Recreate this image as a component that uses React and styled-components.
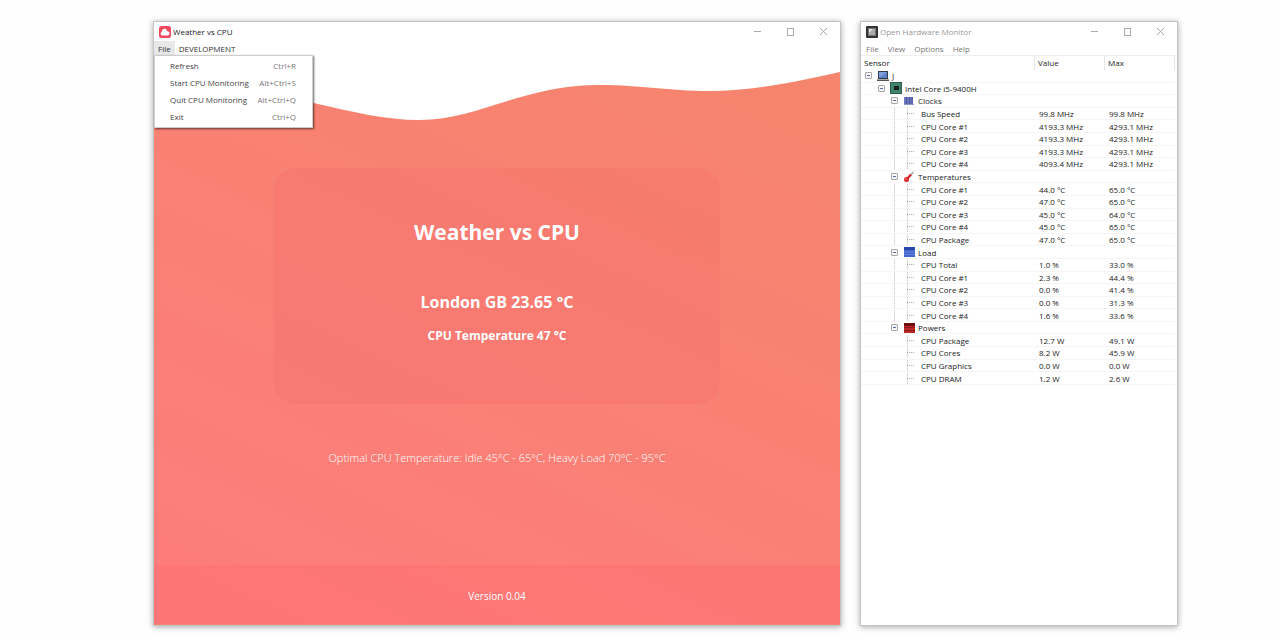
import React from "react";
import styled, { createGlobalStyle } from "styled-components";

const GlobalStyle = createGlobalStyle`
  * {
    box-sizing: border-box;
  }

  body {
    margin: 0;
    background: #fefefe;
    color: #222;
    font-family: "Open Sans", "Noto Sans", sans-serif;
    font-size: 8px;
  }

  button {
    margin: 0;
    padding: 0;
    border: none;
    background: none;
    color: inherit;
    font: inherit;
    cursor: pointer;
  }
`;

const Desktop = styled.main`
  display: flex;
  gap: 19px;
  min-height: 100vh;
  padding: 21px 102px 14px 153px;
`;

const Window = styled.section`
  display: flex;
  flex: ${({ $grow }) => $grow} 1 0;
  flex-direction: column;
  min-width: 0;
  border: 1px solid #c4c4c4;
  background: #fff;
  box-shadow: 0 1px 6px rgba(0, 0, 0, 0.35);
`;

const TitleBar = styled.header`
  display: flex;
  align-items: center;
  height: 19px;
  padding-left: 5px;
  color: ${({ $inactive }) => ($inactive ? "#999" : "#222")};
`;

const WindowTitle = styled.h2`
  flex: 1;
  margin: 0 0 0 2px;
  font-size: 8px;
  font-weight: 400;
`;

const WindowButton = styled.button`
  display: flex;
  align-items: center;
  justify-content: center;
  width: 33px;
  height: 19px;
  color: #aaa;
`;

const MenuBar = styled.nav`
  position: relative;
  display: flex;
  gap: ${({ $muted }) => ($muted ? 1 : 0)}px;
  height: 14px;
  padding-left: ${({ $muted }) => ($muted ? 1 : 0)}px;
  color: ${({ $muted }) => ($muted ? "#777" : "#333")};
`;

const MenuButton = styled.button`
  padding: 0 4px;
  background: ${({ $open }) => ($open ? "#e8e8e8" : "transparent")};
`;

const Dropdown = styled.div`
  position: absolute;
  top: 14px;
  left: 0;
  z-index: 2;
  display: flex;
  flex-direction: column;
  width: 159px;
  padding: 1px 0 2px;
  border: 1px solid #ccc;
  background: #fff;
  box-shadow: 1px 1px 2px rgba(0, 0, 0, 0.6);
`;

const MenuItem = styled.button`
  display: flex;
  align-items: center;
  justify-content: space-between;
  height: 17px;
  padding: 0 16px 0 15px;
  color: #444;
`;

const Shortcut = styled.span`
  color: #777;
`;

const Weather = styled.div`
  position: relative;
  display: flex;
  flex: 1;
  flex-direction: column;
  align-items: center;
  padding-top: 113px;
  background: linear-gradient(25deg, #fe7c7d, #f5856c);
  color: #fff;
  text-align: center;
`;

const Wave = styled.svg`
  position: absolute;
  top: 0;
  left: 0;
  width: 100%;
  height: 71px;
`;

const Card = styled.div`
  display: flex;
  flex-direction: column;
  align-items: center;
  width: 65%;
  height: 236px;
  padding-top: 48px;
  border-radius: 22px;
  background: rgba(246, 110, 110, 0.32);
`;

const Heading = styled.h1`
  margin: 0;
  font-size: 21px;
  font-weight: 700;
  line-height: 32px;
`;

const Place = styled.h2`
  margin: 42px 0 0;
  font-size: 16px;
  font-weight: 700;
  line-height: 24px;
`;

const CpuTemperature = styled.h3`
  margin: 13px 0 0;
  font-size: 12px;
  font-weight: 700;
  line-height: 18px;
`;

const Hint = styled.p`
  flex: 1;
  margin: 46px 0 0;
  font-size: 11px;
  font-weight: 300;
  line-height: 16px;
`;

const Footer = styled.footer`
  width: 100%;
  height: 60px;
  border-bottom: 1px solid #f6856f;
  background: rgba(255, 106, 112, 0.35);
  font-size: 10px;
  line-height: 62px;
`;

const SensorTable = styled.table`
  width: calc(100% - 2px);
  height: 330px;
  border-top: 1px solid #eee;
  border-spacing: 0;
  table-layout: fixed;
`;

const HeaderCell = styled.th`
  width: ${({ $width }) => $width || "auto"};
  height: 14px;
  padding: 0 3px;
  border-right: 1px solid #e5e5e5;
  font-weight: 400;
  line-height: 12px;
  text-align: left;
`;

const Cell = styled.td`
  padding: 0 4px;
  border-bottom: 1px solid #f5f5f5;
  line-height: 11px;
`;

const TreeCell = styled(Cell)`
  padding: 0 0 0 1px;
`;

const Branch = styled.div`
  display: flex;
  align-items: center;
  height: 11px;
`;

const Guide = styled.span`
  display: flex;
  justify-content: flex-end;
  align-items: center;
  align-self: stretch;
  width: 13px;
  background: ${({ $line }) =>
    $line
      ? "repeating-linear-gradient(#ccc 0 1px, #eee 1px 2px) 6px 0 / 1px 100% no-repeat"
      : "none"};
`;

const Twig = styled.span`
  width: 7px;
  border-top: 1px dotted #aaa;
`;

const Toggle = styled.button`
  width: 7px;
  height: 7px;
  margin: 0 3px;
  border: 1px solid #aaa;
  border-radius: 1px;
  background: linear-gradient(#5a6fa8, #5a6fa8) center / 3px 1px no-repeat #f6f6f6;
`;

const NodeIcon = styled.svg`
  width: 12px;
  height: 12px;
  margin: 0 3px 0 2px;
`;

const LeafName = styled.span`
  margin-left: 7px;
`;

const AppLogo = () => (
  <svg width="12" height="12" viewBox="0 0 24 24">
    <rect width="24" height="24" rx="5" fill="#ee4a5e" />
    <path
      d="M6.500 19a4 4 0 0 1-.9-7.600C6 7 9 4.800 12 5.500c2.500.5 3.500 2.500 3.800 4.500 3.200.5 5.200 2.500 5.200 5 0 2.600-1.800 4-4 4z"
      fill="#fff"
    />
  </svg>
);

const MonitorLogo = () => (
  <svg width="12" height="12" viewBox="0 0 12 12">
    <rect width="12" height="12" rx="1" fill="#333" />
    <rect x="2.500" y="2.500" width="7" height="7" fill="#aaa" stroke="#777" />
    <path d="M3 3h4L3 7z" fill="#ddd" />
  </svg>
);

const WindowControls = () => (
  <>
    <WindowButton aria-label="Minimize">
      <svg width="7" height="7" viewBox="0 0 7 7">
        <path d="M0 3.500h7" stroke="currentColor" />
      </svg>
    </WindowButton>
    <WindowButton aria-label="Maximize">
      <svg width="8" height="8" viewBox="0 0 8 8">
        <rect x=".5" y=".5" width="6" height="7" fill="none" stroke="currentColor" />
      </svg>
    </WindowButton>
    <WindowButton aria-label="Close">
      <svg width="7" height="7" viewBox="0 0 7 7">
        <path d="M0 0l7 7M7 0L0 7" stroke="currentColor" />
      </svg>
    </WindowButton>
  </>
);

const ICONS = {
  computer: (
    <>
      <rect x="1" y="1" width="10" height="8" fill="#333a4c" />
      <rect x="2" y="2" width="8" height="6" fill="#7f9fdc" />
      <path d="M2 8l8-6v6z" fill="#5c7fc8" />
      <rect x="0" y="9.500" width="12" height="1.500" fill="#555" />
    </>
  ),
  cpu: (
    <>
      <rect width="12" height="12" fill="#2f5f50" />
      <rect x="1" y="1" width="10" height="10" fill="#41826c" />
      <rect x="4" y="4" width="5" height="4" fill="#16221e" />
    </>
  ),
  clocks: (
    <>
      <rect x="1" y="2" width="9" height="8" fill="#6f78bd" />
      <path d="M3.500 2v7M6.500 2v7M9 2v7" stroke="#4a53a0" />
      <path d="M1 9.500h10" stroke="#8f96cc" />
    </>
  ),
  temperatures: (
    <>
      <path d="M4 8l6.500-7" stroke="#bbb" strokeWidth="2" />
      <path d="M3.500 8.500L8 3.500" stroke="#d42020" strokeWidth="2" />
      <circle cx="3.500" cy="8.500" r="2.500" fill="#d92626" />
      <circle cx="3" cy="8" r=".8" fill="#f79090" />
    </>
  ),
  load: (
    <>
      <rect x="1" y="1" width="11" height="10" fill="#4568cf" />
      <rect x="1" y="1" width="11" height="3" fill="#2a46a8" />
      <path d="M1 6h11M1 8.500h11" stroke="#7590e2" strokeWidth=".6" />
    </>
  ),
  powers: (
    <>
      <rect x="1" y="1" width="11" height="10" fill="#bb2727" />
      <rect x="1" y="1" width="11" height="3" fill="#6d0d0d" />
      <path d="M1 5.500h11M1 8.500h11" stroke="#7d1616" strokeWidth=".7" />
    </>
  ),
};

const MENU_ITEMS = [
  ["Refresh", "Ctrl+R"],
  ["Start CPU Monitoring", "Alt+Ctrl+S"],
  ["Quit CPU Monitoring", "Alt+Ctrl+Q"],
  ["Exit", "Ctrl+Q"],
];

const GROUPS = [
  {
    name: "Clocks",
    icon: "clocks",
    sensors: [
      ["Bus Speed", "99.8 MHz", "99.8 MHz"],
      ["CPU Core #1", "4193.3 MHz", "4293.1 MHz"],
      ["CPU Core #2", "4193.3 MHz", "4293.1 MHz"],
      ["CPU Core #3", "4193.3 MHz", "4293.1 MHz"],
      ["CPU Core #4", "4093.4 MHz", "4293.1 MHz"],
    ],
  },
  {
    name: "Temperatures",
    icon: "temperatures",
    sensors: [
      ["CPU Core #1", "44.0 °C", "65.0 °C"],
      ["CPU Core #2", "47.0 °C", "65.0 °C"],
      ["CPU Core #3", "45.0 °C", "64.0 °C"],
      ["CPU Core #4", "45.0 °C", "65.0 °C"],
      ["CPU Package", "47.0 °C", "65.0 °C"],
    ],
  },
  {
    name: "Load",
    icon: "load",
    sensors: [
      ["CPU Total", "1.0 %", "33.0 %"],
      ["CPU Core #1", "2.3 %", "44.4 %"],
      ["CPU Core #2", "0.0 %", "41.4 %"],
      ["CPU Core #3", "0.0 %", "31.3 %"],
      ["CPU Core #4", "1.6 %", "33.6 %"],
    ],
  },
  {
    name: "Powers",
    icon: "powers",
    sensors: [
      ["CPU Package", "12.7 W", "49.1 W"],
      ["CPU Cores", "8.2 W", "45.9 W"],
      ["CPU Graphics", "0.0 W", "0.0 W"],
      ["CPU DRAM", "1.2 W", "2.6 W"],
    ],
  },
];

const NodeRow = ({ depth, icon, name }) => (
  <tr>
    <TreeCell>
      <Branch>
        {Array.from({ length: depth }, (_, i) => (
          <Guide key={i} />
        ))}
        <Toggle aria-label={`Collapse ${name}`} />
        <NodeIcon viewBox="0 0 12 12">{ICONS[icon]}</NodeIcon>
        {name}
      </Branch>
    </TreeCell>
    <Cell />
    <Cell />
  </tr>
);

const SensorRow = ({ name, value, max, lastGroup }) => (
  <tr>
    <TreeCell>
      <Branch>
        <Guide />
        <Guide />
        <Guide $line={!lastGroup} />
        <Guide $line>
          <Twig />
        </Guide>
        <LeafName>{name}</LeafName>
      </Branch>
    </TreeCell>
    <Cell>{value}</Cell>
    <Cell>{max}</Cell>
  </tr>
);

const WeatherWindow = () => (
  <Window $grow={686}>
    <TitleBar>
      <AppLogo />
      <WindowTitle>Weather vs CPU</WindowTitle>
      <WindowControls />
    </TitleBar>
    <MenuBar>
      <MenuButton $open>File</MenuButton>
      <MenuButton>DEVELOPMENT</MenuButton>
      <Dropdown>
        {MENU_ITEMS.map(([label, keys]) => (
          <MenuItem key={label}>
            {label}
            <Shortcut>{keys}</Shortcut>
          </MenuItem>
        ))}
      </Dropdown>
    </MenuBar>
    <Weather>
      <Wave viewBox="0 -1 688 71" preserveAspectRatio="none">
        <path
          d="M0 -1V44C50 30 100 36 160 47C200 56 232 64 266 64C325 64 370 29 447 29C490 29 515 35 557 35C605 35 650 24 688 16V-1z"
          fill="#fff"
        />
      </Wave>
      <Card>
        <Heading>Weather vs CPU</Heading>
        <Place>London GB 23.65 °C</Place>
        <CpuTemperature>CPU Temperature 47 °C</CpuTemperature>
      </Card>
      <Hint>Optimal CPU Temperature: Idle 45°C - 65°C, Heavy Load 70°C - 95°C</Hint>
      <Footer>Version 0.04</Footer>
    </Weather>
  </Window>
);

const MonitorWindow = () => (
  <Window $grow={316}>
    <TitleBar $inactive>
      <MonitorLogo />
      <WindowTitle>Open Hardware Monitor</WindowTitle>
      <WindowControls />
    </TitleBar>
    <MenuBar $muted>
      <MenuButton>File</MenuButton>
      <MenuButton>View</MenuButton>
      <MenuButton>Options</MenuButton>
      <MenuButton>Help</MenuButton>
    </MenuBar>
    <SensorTable>
      <thead>
        <tr>
          <HeaderCell>Sensor</HeaderCell>
          <HeaderCell $width="70px">Value</HeaderCell>
          <HeaderCell $width="70px">Max</HeaderCell>
        </tr>
      </thead>
      <tbody>
        <NodeRow depth={0} icon="computer" name="J" />
        <NodeRow depth={1} icon="cpu" name="Intel Core i5-9400H" />
        {GROUPS.map((group, index) => (
          <React.Fragment key={group.name}>
            <NodeRow depth={2} icon={group.icon} name={group.name} />
            {group.sensors.map(([name, value, max]) => (
              <SensorRow
                key={name}
                name={name}
                value={value}
                max={max}
                lastGroup={index === GROUPS.length - 1}
              />
            ))}
          </React.Fragment>
        ))}
      </tbody>
    </SensorTable>
  </Window>
);

const App = () => (
  <>
    <GlobalStyle />
    <Desktop>
      <WeatherWindow />
      <MonitorWindow />
    </Desktop>
  </>
);

export default App;
